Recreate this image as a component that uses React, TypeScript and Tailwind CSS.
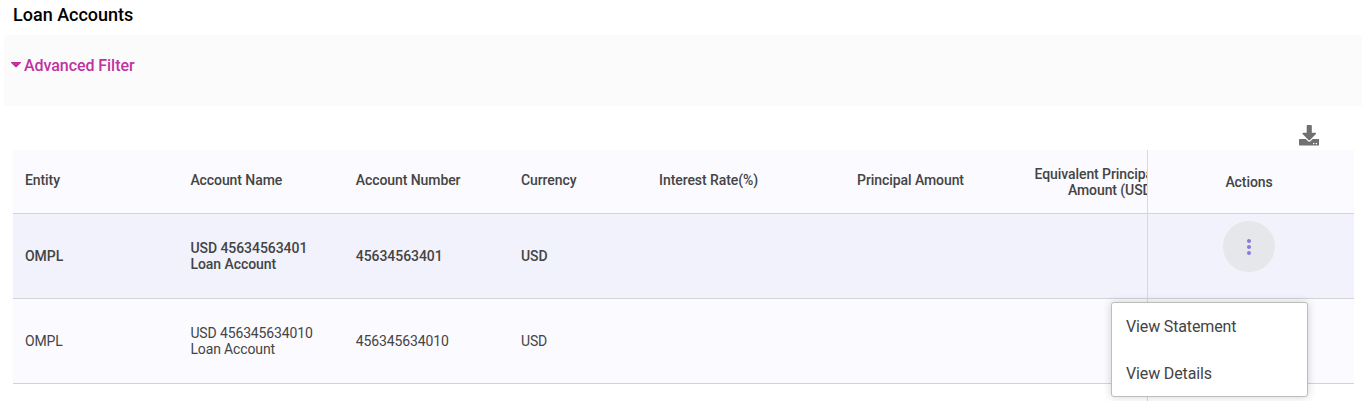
import { FaDownload } from "react-icons/fa";
import { MdMoreVert } from "react-icons/md";

type Account = {
  entity: string;
  name: string[];
  number: string;
  currency: string;
  active: boolean;
};

const accounts: Account[] = [
  { entity: "OMPL", name: ["USD 45634563401", "Loan Account"], number: "45634563401", currency: "USD", active: true },
  { entity: "OMPL", name: ["USD 456345634010", "Loan Account"], number: "456345634010", currency: "USD", active: false },
];

const columns =
  "grid flex-none w-[1157px] grid-cols-[165.4px_165.4px_165.2px_109px_152px_206px_192.5px] items-center";

function ActionsMenu() {
  return (
    <div
      role="menu"
      className="absolute left-[-37px] top-[88px] z-10 flex h-[95px] w-[197px] flex-col rounded-[3px] border border-[#bdbdbd] bg-white text-[16px] leading-[47px] font-normal tracking-[-0.14px] text-[#444] shadow-[0_0_8px_rgba(0,0,0,0.18)]"
    >
      <button role="menuitem" className="h-[47px] pl-[14px] text-left">View Statement</button>
      <button role="menuitem" className="h-[47px] pl-[14px] text-left">View Details</button>
    </div>
  );
}

function AccountRow({ account }: { account: Account }) {
  const tone = account.active
    ? "bg-[#f2f2fc] font-medium tracking-[-0.06px]"
    : "bg-[#fafaff] font-normal tracking-[-0.13px]";
  return (
    <div className={`flex h-[85px] border-b border-[#d3d3d7] ${tone}`}>
      <div className="flex w-[1134px] overflow-hidden">
        <div className={columns}>
          <div className="pl-3">{account.entity}</div>
          <div className="pl-3">
            {account.name.map((line) => (
              <div key={line}>{line}</div>
            ))}
          </div>
          <div className="pl-3">{account.number}</div>
          <div className="pl-3">{account.currency}</div>
        </div>
      </div>
      <div className="relative flex w-[207px] justify-center border-l border-[#d8d8dd] pr-[4px] pt-[7px]">
        {account.active && (
          <>
            <button
              aria-label="Row actions"
              className="flex h-[51px] w-[52px] items-center justify-center rounded-full bg-[#e6e7eb] text-[#8b78dd]"
            >
              <MdMoreVert size={24} />
            </button>
            <ActionsMenu />
          </>
        )}
      </div>
    </div>
  );
}

export default function App() {
  return (
    <main className="flex h-[401px] w-[1362px] flex-col overflow-hidden bg-white font-['Roboto',sans-serif] text-[14px] leading-4 text-[#444]">
      <h1 className="h-[35px] pl-[13px] pt-[5px] text-[18px] leading-5 font-medium text-black">Loan Accounts</h1>
      <section className="ml-1 h-[71px] bg-[#fbfbfb] pl-[7px] pt-[21px]">
        <button className="flex items-center gap-[3px] text-[16px] leading-5 font-medium tracking-[-0.06px] text-[#c032a1]">
          <svg width="10" height="6" viewBox="0 0 10 6" className="mb-[2px]" fill="currentColor">
            <path d="M0 0H10V0.7L5.5 5.2H4.5L0 0.7Z" />
          </svg>
          Advanced Filter
        </button>
      </section>
      <div className="flex h-[44px] justify-end pr-[43px] pt-[19px] text-[#707070]">
        <FaDownload size={20.5} />
      </div>
      <section className="ml-[13px] flex w-[1341px] flex-1 flex-col">
        <div className="flex h-[64px] border-b border-[#d3d3d7] bg-[#fafaff] font-medium tracking-[-0.08px]">
          <div className="flex w-[1134px] overflow-hidden">
            <div className={columns}>
              <div className="pb-[4px] pl-3">Entity</div>
              <div className="pb-[4px] pl-3">Account Name</div>
              <div className="pb-[4px] pl-3">Account Number</div>
              <div className="pb-[4px] pl-3">Currency</div>
              <div className="pb-[4px] pr-[12px] text-right">Interest Rate(%)</div>
              <div className="pb-[4px] pr-[12px] text-right">Principal Amount</div>
              <div className="pr-[12px] text-right tracking-[-0.08px]">
                Equivalent Principal
                <br />
                Amount (USD)
              </div>
            </div>
          </div>
          <div className="flex w-[207px] items-center justify-center border-l border-[#d8d8dd] pr-[4px] pt-[1px]">
            Actions
          </div>
        </div>
        {accounts.map((account) => (
          <AccountRow key={account.number} account={account} />
        ))}
        <div className="ml-[1134px] flex-1 border-l border-[#d8d8dd]" />
      </section>
    </main>
  );
}
